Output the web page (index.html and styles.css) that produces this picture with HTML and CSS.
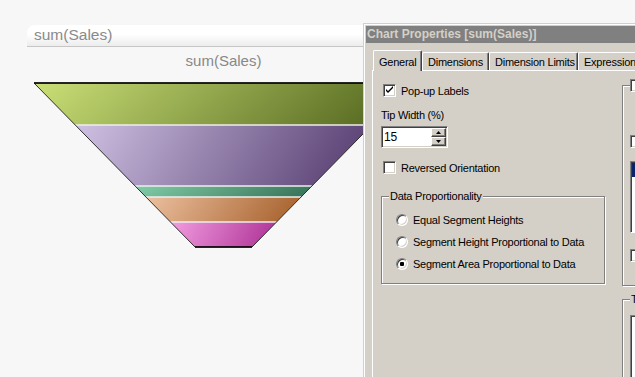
FILE: index.html
```html
<!DOCTYPE html>
<html lang="en">
<head>
    <meta charset="UTF-8">
    <title>sum(Sales) - Chart Properties</title>
    <link rel="stylesheet" href="styles.css">
</head>
<body>
    <div class="chart">
        <div class="caption">sum(Sales)</div>
        <div class="chart-title">sum(Sales)</div>
        <svg class="funnel" width="393" height="167" viewBox="0 0 393 167">
            <defs>
                <linearGradient id="g1" x1="0" y1="0" x2="1" y2="0.12">
                    <stop offset="0" stop-color="#cbe077"/>
                    <stop offset="1" stop-color="#586b22"/>
                </linearGradient>
                <linearGradient id="g2" x1="0" y1="0" x2="1" y2="0.12">
                    <stop offset="0" stop-color="#cfc1e3"/>
                    <stop offset="1" stop-color="#5c4476"/>
                </linearGradient>
                <linearGradient id="g3" x1="0" y1="0" x2="1" y2="0.12">
                    <stop offset="0" stop-color="#82cea9"/>
                    <stop offset="1" stop-color="#3c785c"/>
                </linearGradient>
                <linearGradient id="g4" x1="0" y1="0" x2="1" y2="0.12">
                    <stop offset="0" stop-color="#ecc0a0"/>
                    <stop offset="1" stop-color="#aa6632"/>
                </linearGradient>
                <linearGradient id="g5" x1="0" y1="0" x2="1" y2="0.12">
                    <stop offset="0" stop-color="#f29de0"/>
                    <stop offset="1" stop-color="#b2389a"/>
                </linearGradient>
            </defs>
            <polygon fill="url(#g1)" points="7,1 386,1 344.8,43 48.2,43"/>
            <polygon fill="url(#g2)" points="48.2,43 344.8,43 284.9,104 108.1,104"/>
            <polygon fill="url(#g3)" points="108.1,104 284.9,104 274.1,115 118.9,115"/>
            <polygon fill="url(#g4)" points="118.9,115 274.1,115 249.5,140 143.5,140"/>
            <polygon fill="url(#g5)" points="143.5,140 249.5,140 225,165 168,165"/>
            <g stroke="#eeeeee" stroke-width="1.5">
                <line x1="48.2" y1="43" x2="344.8" y2="43"/>
                <line x1="108.1" y1="104" x2="284.9" y2="104"/>
                <line x1="118.9" y1="115" x2="274.1" y2="115"/>
                <line x1="143.5" y1="140" x2="249.5" y2="140"/>
            </g>
            <polygon fill="none" stroke="#2e2e2e" stroke-width="1" points="7,1 386,1 225,165 168,165"/>
            <line x1="7" y1="1" x2="386" y2="1" stroke="#000" stroke-width="1.5"/>
            <line x1="168" y1="165" x2="225" y2="165" stroke="#000" stroke-width="1.5"/>
        </svg>
    </div>

    <div class="dialog">
        <div class="titlebar">Chart Properties [sum(Sales)]</div>
        <div class="tabs">
            <div class="tab active tab-general">General</div>
            <div class="tab tab-dims">Dimensions</div>
            <div class="tab tab-limits">Dimension Limits</div>
            <div class="tab tab-expr">Expressions</div>
        </div>
        <div class="panel">
            <div class="col-left">
                <div class="check-row">
                    <span class="check">
                        <svg width="11" height="11" viewBox="0 0 11 11"><path d="M2 4v2l2 2 5-5v-2l-5 5z" fill="#000"/></svg>
                    </span>
                    <span>Pop-up Labels</span>
                </div>
                <div class="label-row">Tip Width (%)</div>
                <div class="spin">
                    <span class="spin-value">15</span>
                    <span class="spin-buttons">
                        <span class="spin-btn"><svg width="5" height="3" viewBox="0 0 5 3"><polygon points="2.5,0 5,3 0,3" fill="#000"/></svg></span>
                        <span class="spin-btn"><svg width="5" height="3" viewBox="0 0 5 3"><polygon points="0,0 5,0 2.5,3" fill="#000"/></svg></span>
                    </span>
                </div>
                <div class="check-row reversed">
                    <span class="check"></span>
                    <span>Reversed Orientation</span>
                </div>
                <div class="group proportion">
                    <span class="legend">Data Proportionality</span>
                    <div class="radio-row"><span class="radio"></span><span>Equal Segment Heights</span></div>
                    <div class="radio-row"><span class="radio"></span><span>Segment Height Proportional to Data</span></div>
                    <div class="radio-row"><span class="radio checked"></span><span>Segment Area Proportional to Data</span></div>
                </div>
            </div>
            <div class="col-right">
                <div class="group tall">
                    <span class="check legend-check"></span>
                    <span class="check mid-check"></span>
                    <div class="list"><div class="list-sel"></div></div>
                    <span class="check low-check"></span>
                </div>
                <div class="group lower">
                    <span class="legend">Text</span>
                    <div class="list long"></div>
                </div>
            </div>
        </div>
    </div>
</body>
</html>
```

FILE: styles.css
```css
body {
    margin: 0;
    height: 377px;
    overflow: hidden;
    position: relative;
    background-color: #f7f7f7;
    font-family: "Liberation Sans", Arial, sans-serif;
}

/* chart object */
.chart {
    width: 393px;
    margin: 25px 0 0 27px;
}

.caption {
    height: 21px;
    line-height: 20px;
    padding-left: 7px;
    font-size: 15.5px;
    color: #8a8a8a;
    border-bottom: 1px solid #c6c6c6;
    border-top-left-radius: 8px;
    background: linear-gradient(#ffffff 45%, #ececec);
}

.chart-title {
    margin-top: 4px;
    line-height: 20px;
    font-size: 15px;
    text-align: center;
    color: #888888;
}

.funnel {
    display: block;
    margin-top: 11px;
}

/* properties dialog */
.dialog {
    position: absolute;
    left: 363px;
    top: 23px;
    width: 300px;
    height: 380px;
    padding: 2px;
    background-color: #d4d0c8;
    border: 1px solid;
    border-color: #d4d0c8 #404040 #404040 #d4d0c8;
    box-shadow: inset 1px 1px 0 #ffffff;
    font-size: 11px;
    letter-spacing: -0.25px;
    color: #000000;
}

.titlebar {
    height: 17px;
    line-height: 17px;
    padding-left: 1px;
    background-color: #808080;
    color: #d4d0c8;
    font-size: 12px;
    font-weight: bold;
    letter-spacing: 0;
    white-space: nowrap;
}

.tabs {
    display: flex;
    align-items: flex-end;
    height: 20px;
    margin: 7px 0 0 7px;
}

.tab {
    box-sizing: border-box;
    height: 18px;
    padding: 1px 0 0 5px;
    line-height: 16px;
    white-space: nowrap;
    border-top: 1px solid #ffffff;
    border-left: 1px solid #ffffff;
    border-right: 1px solid #404040;
    border-radius: 2px 2px 0 0;
    box-shadow: inset -1px 0 0 #808080;
}

.tab.active {
    height: 21px;
    margin-bottom: -1px;
    padding-top: 3px;
    position: relative;
    z-index: 1;
    background-color: #d4d0c8;
}

.tab-general { width: 49px; }
.tab-dims { width: 67px; }
.tab-limits { width: 89px; }
.tab-expr { width: 80px; }

.panel {
    display: flex;
    gap: 17px;
    height: 330px;
    margin-left: 6px;
    padding-left: 8px;
    border-top: 1px solid #ffffff;
    border-left: 1px solid #ffffff;
}

.col-left {
    width: 224px;
    flex-shrink: 0;
    padding-top: 11px;
}

.col-right {
    width: 150px;
    flex-shrink: 0;
    padding-top: 14px;
}

/* controls */
.check-row {
    display: flex;
    align-items: center;
    height: 17px;
}

.check {
    display: block;
    box-sizing: border-box;
    width: 13px;
    height: 13px;
    background-color: #ffffff;
    border: 1px solid;
    border-color: #808080 #ffffff #ffffff #808080;
    box-shadow: inset 1px 1px 0 #404040, inset -1px -1px 0 #d4d0c8;
}

.check svg {
    display: block;
}

.check-row .check {
    margin: 0 5px 0 2px;
}

.label-row {
    margin-top: 8px;
    line-height: 16px;
}

.spin {
    display: flex;
    box-sizing: border-box;
    width: 67px;
    height: 22px;
    margin-top: 3px;
    padding: 1px 1px 1px 2px;
    background-color: #ffffff;
    border: 1px solid;
    border-color: #808080 #ffffff #ffffff #808080;
    box-shadow: inset 1px 1px 0 #404040, inset -1px -1px 0 #d4d0c8;
}

.spin-value {
    line-height: 16px;
    font-size: 12px;
    margin-top: 1px;
}

.spin-buttons {
    display: flex;
    flex-direction: column;
    margin-left: auto;
    width: 15px;
}

.spin-btn {
    display: flex;
    align-items: center;
    justify-content: center;
    box-sizing: border-box;
    height: 9px;
    background-color: #d4d0c8;
    border: 1px solid;
    border-color: #ffffff #404040 #404040 #ffffff;
    box-shadow: inset -1px -1px 0 #808080;
}

.spin-btn svg {
    display: block;
}

.check-row.reversed {
    margin-top: 11px;
}

.group {
    position: relative;
    box-sizing: border-box;
    border: 1px solid #808080;
    box-shadow: 1px 1px 0 #ffffff, inset 1px 1px 0 #ffffff;
}

.legend {
    position: absolute;
    left: 7px;
    top: -8px;
    padding: 0 1px;
    line-height: 14px;
    background-color: #d4d0c8;
}

.proportion {
    width: 224px;
    height: 88px;
    margin-top: 20px;
    padding: 12px 0 0 14px;
}

.radio-row {
    display: flex;
    align-items: center;
    height: 22px;
}

.radio {
    display: flex;
    align-items: center;
    justify-content: center;
    box-sizing: border-box;
    width: 12px;
    height: 12px;
    margin-right: 5px;
    border-radius: 50%;
    background-color: #ffffff;
    border: 1px solid;
    border-color: #808080 #ffffff #ffffff #808080;
    box-shadow: inset 1px 1px 0 #404040, inset -1px -1px 0 #d4d0c8;
}

.radio.checked::after {
    content: "";
    width: 4px;
    height: 4px;
    border-radius: 1px;
    background-color: #000000;
}

.tall {
    height: 201px;
    padding: 0 0 0 7px;
}

.legend-check {
    position: absolute;
    left: 7px;
    top: -7px;
}

.mid-check {
    margin-top: 49px;
}

.list {
    box-sizing: border-box;
    height: 72px;
    margin-top: 13px;
    background-color: #ffffff;
    border: 1px solid;
    border-color: #808080 #ffffff #ffffff #808080;
    box-shadow: inset 1px 1px 0 #404040;
}

.list-sel {
    height: 14px;
    margin: 1px 0 0 1px;
    background-color: #0a246a;
}

.low-check {
    margin-top: 16px;
}

.lower {
    height: 120px;
    margin-top: 13px;
    padding: 15px 0 0 7px;
}

.list.long {
    height: 100px;
    margin-top: 0;
}
```
